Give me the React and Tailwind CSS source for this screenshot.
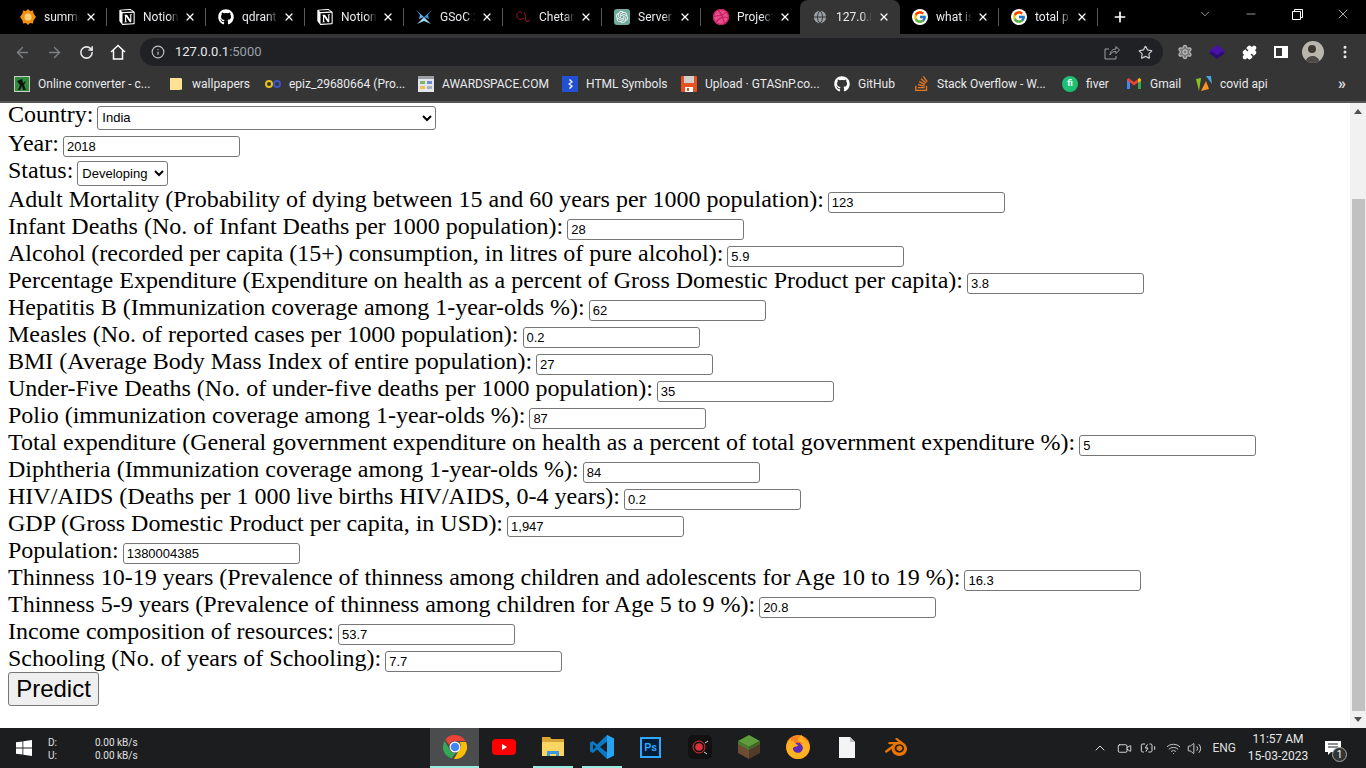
import React from "react";
import { FaGithub } from "react-icons/fa";
import { FcGoogle } from "react-icons/fc";
import { SiNotion, SiDribbble, SiOpenai, SiStackoverflow, SiBlender, SiFirefoxbrowser } from "react-icons/si";
import { ArrowLeft, ArrowRight, RotateCw, Info, Star, Puzzle, MoreVertical, X, Plus, ChevronDown, ChevronUp, Minus, Globe, Settings, Wifi, Volume2, Video, BatteryCharging } from "lucide-react";

const G = () => <span className="w-4 h-4 rounded-full bg-white flex items-center justify-center"><FcGoogle size={14} /></span>;

const Summer = () => (
  <svg width="16" height="16" viewBox="0 0 16 16">
    <path d="M8 0l2 2 3-.5.5 3L16 8l-2.500 3.500-.5 3-3-.5L8 16l-2-2-3 .5-.5-3L0 8l2.500-3.500.5-3 3 .5z" fill="#f29111" />
    <circle cx="8" cy="8" r="3.500" fill="#ffd27a" />
  </svg>
);
const Gsoc = () => (
  <svg width="16" height="16" viewBox="0 0 16 16">
    <path d="M0 1l8 7-5 2 1-4z" fill="#5fb4e8" /><path d="M16 1L8 8l5 2-1-4z" fill="#3f8fd0" />
    <path d="M1 15l7-7 7 7-7-3z" fill="#9fd3f2" />
  </svg>
);
const Chetan = () => (
  <svg width="16" height="16" viewBox="0 0 16 16" fill="none" stroke="#a0122c" strokeWidth="1">
    <path d="M7 4C4 1 1 5 2 8c1 3 5 3 7 1M9 3c2 2 1 7 2 9 1 1 3 0 4-1" />
  </svg>
);

const tabs = [
  { icon: <Summer />, t: "summer" },
  { icon: <SiNotion size={16} color="#fff" />, t: "Notion" },
  { icon: <FaGithub size={16} color="#fff" />, t: "qdrant" },
  { icon: <SiNotion size={16} color="#fff" />, t: "Notion" },
  { icon: <Gsoc />, t: "GSoC 2" },
  { icon: <Chetan />, t: "Chetan" },
  { icon: <span className="w-4 h-4 rounded-[3px] bg-[#74aa9c] flex items-center justify-center"><SiOpenai size={12} color="#fff" /></span>, t: "Server" },
  { icon: <span className="w-4 h-4 rounded-full bg-[#ea4c89] flex items-center justify-center"><SiDribbble size={16} color="#c32361" /></span>, t: "Project" },
  { icon: <Globe size={16} color="#353535" fill="#9aa0a6" strokeWidth={1.500} />, t: "127.0.0.1", active: true },
  { icon: <G />, t: "what is" },
  { icon: <G />, t: "total p" },
];

const Bm = ({ className, icon, t }) => (
  <div className={`flex items-center gap-2 shrink-0 whitespace-nowrap ${className}`}>
    <span className="w-4 h-4 flex items-center justify-center shrink-0">{icon}</span>
    <span>{t}</span>
  </div>
);

const Folder = () => (
  <svg width="12" height="14" viewBox="0 0 12 14"><path d="M0 1h11l1 1v11H0z" fill="#fde293" /><path d="M10 12h2v1h-2z" fill="#c9a74e" /></svg>
);

const Row = ({ label, v }) => (
  <div>
    <span className="text-[24px]">{label}</span>{" "}
    <input defaultValue={v} className="w-[177px] h-[21px] border border-[#767676] rounded-[3px] px-[3px] py-[1px] bg-white text-black text-[13px] font-['Liberation_Sans',sans-serif]" />
  </div>
);

const fields = [
  ["Adult Mortality (Probability of dying between 15 and 60 years per 1000 population):", "123"],
  ["Infant Deaths (No. of Infant Deaths per 1000 population):", "28"],
  ["Alcohol (recorded per capita (15+) consumption, in litres of pure alcohol):", "5.9"],
  ["Percentage Expenditure (Expenditure on health as a percent of Gross Domestic Product per capita):", "3.8"],
  ["Hepatitis B (Immunization coverage among 1-year-olds %):", "62"],
  ["Measles (No. of reported cases per 1000 population):", "0.2"],
  ["BMI (Average Body Mass Index of entire population):", "27"],
  ["Under-Five Deaths (No. of under-five deaths per 1000 population):", "35"],
  ["Polio (immunization coverage among 1-year-olds %):", "87"],
  ["Total expenditure (General government expenditure on health as a percent of total government expenditure %):", "5"],
  ["Diphtheria (Immunization coverage among 1-year-olds %):", "84"],
  ["HIV/AIDS (Deaths per 1 000 live births HIV/AIDS, 0-4 years):", "0.2"],
  ["GDP (Gross Domestic Product per capita, in USD):", "1,947"],
  ["Population:", "1380004385"],
  ["Thinness 10-19 years (Prevalence of thinness among children and adolescents for Age 10 to 19 %):", "16.3"],
  ["Thinness 5-9 years (Prevalence of thinness among children for Age 5 to 9 %):", "20.8"],
  ["Income composition of resources:", "53.7"],
  ["Schooling (No. of years of Schooling):", "7.7"],
];

const Chrome = () => (
  <svg width="24" height="24" viewBox="0 0 24 24">
    <path d="M12 0a12 12 0 0 1 10.400 6H12a6 6 0 0 0-5.700 4L2.300 4.400A12 12 0 0 1 12 0z" fill="#ea4335" />
    <path d="M1.600 6l5 8.600a6 6 0 0 0 6 3.300L8.500 23.500A12 12 0 0 1 1.600 6z" fill="#34a853" />
    <path d="M22.900 7a12 12 0 0 1-12 17l5-8.500a6 6 0 0 0 .5-8.500z" fill="#fbbc04" />
    <circle cx="12" cy="12" r="5.500" fill="#fff" /><circle cx="12" cy="12" r="4.300" fill="#4285f4" />
  </svg>
);
const Yt = () => (
  <svg width="24" height="16" viewBox="0 0 24 16"><rect width="24" height="16" rx="4" fill="#f00" /><path d="M10 5l5 3-5 3z" fill="#fff" /></svg>
);
const Explorer = () => (
  <svg width="22" height="20" viewBox="0 0 22 20">
    <path d="M0 0h8l2 3h-10z" fill="#e0a526" /><rect y="2" width="22" height="5" fill="#d9a53a" />
    <rect y="5" width="22" height="14" fill="#fcd462" />
    <path d="M5 19v-5h12v5h-3v-2H8v2z" fill="#3a9bdc" />
  </svg>
);
const Vscode = () => (
  <svg width="24" height="24" viewBox="0 0 24 24">
    <path d="M17 0l7 3.500v17L17 24 7 14.500l-4 3.500-3-1.500v-9L3 6l4 3.500z" fill="#0a7ac6" />
    <path d="M17 0l7 3.500v17L17 24z" fill="#2aa3ef" /><path d="M17 6.500L10 12l7 5.500z" fill="#1b1d1e" />
    <path d="M3 9l3 3-3 3z" fill="#1b1d1e" />
  </svg>
);
const Rec = () => (
  <span className="w-6 h-6 rounded-[5px] bg-[#111] flex items-center justify-center">
    <svg width="18" height="18" viewBox="0 0 18 18" fill="none"><circle cx="8" cy="9" r="6" stroke="#e0313b" strokeWidth="1" /><circle cx="8" cy="9" r="3.800" fill="#e0313b" /><path d="M14 5l3-2M13 14l3 2" stroke="#ddd" strokeWidth="1" /></svg>
  </span>
);
const Grass = () => (
  <svg width="22" height="24" viewBox="0 0 22 24">
    <path d="M11 0l11 6-11 6L0 6z" fill="#5f9c3c" /><path d="M0 6l11 6v12L0 18z" fill="#6d4c33" /><path d="M22 6l-11 6v12l11-6z" fill="#523a28" />
    <path d="M0 6l11 6v3L0 9z" fill="#4a7d2e" /><path d="M22 6l-11 6v3l11-6z" fill="#3e6b27" />
  </svg>
);
const Fox = () => (
  <span className="w-6 h-6 flex items-center justify-center rounded-full bg-[radial-gradient(circle_at_50%_55%,#5b2bbd_0_28%,#ff6a2a_30%,#ff9b1f_100%)]">
    <SiFirefoxbrowser size={24} color="#ffb21f" />
  </span>
);
const Doc = () => (
  <svg width="16" height="21" viewBox="0 0 16 21"><path d="M0 0h11l5 5v16H0z" fill="#f4f4f4" /><path d="M11 0l5 5h-5z" fill="#bdbdbd" /></svg>
);
const Win = () => (
  <svg width="16" height="16" viewBox="0 0 16 16" fill="#fff"><path d="M0 2.300l6.500-.9v6.200H0zM7.300 1.300L16 0v7.600H7.300zM0 8.400h6.500v6.200L0 13.700zM7.300 8.400H16V16l-8.700-1.300z" /></svg>
);

const Task = ({ children, active, bar }) => (
  <div className={`w-[49px] h-full flex flex-col items-center shrink-0 ${active ? "bg-[#4a4c4d]" : ""}`}>
    <div className="flex-1 flex items-center justify-center">{children}</div>
    <div className={`h-[2px] ${active ? "w-full bg-[#99ebe0]" : bar ? "w-[40px] bg-[#99ebe0]" : "w-0"}`} />
  </div>
);

export default function App() {
  return (
    <div className="w-[1366px] h-[768px] overflow-hidden flex flex-col bg-white font-['Roboto',sans-serif]">
      {/* tab strip */}
      <div className="h-[34px] bg-black flex items-center pl-2 shrink-0 text-[12px] text-[#e8eaed]">
        {tabs.map((t, i) => (
          <div key={i} className={t.active ? "w-[100px] h-full pl-3 pr-[10px] bg-[#353535] rounded-t-[8px] flex items-center shrink-0" : `w-[99px] h-[18px] pl-3 pr-[9px] flex items-center shrink-0 ${tabs[i + 1]?.active || t.active ? "" : "border-r border-[#5a5a5a]"}`}>
            <span className="w-4 h-4 flex items-center justify-center shrink-0">{t.icon}</span>
            <span className="ml-2 w-[36px] overflow-hidden whitespace-nowrap [mask-image:linear-gradient(90deg,#000_70%,transparent)]">{t.t}</span>
            <X size={12} strokeWidth={2.500} className="ml-auto text-white shrink-0" />
          </div>
        ))}
        <div className="w-[44px] flex justify-center shrink-0"><Plus size={16} strokeWidth={2.500} color="#fff" /></div>
        <div className="ml-auto flex h-full items-center shrink-0 text-white">
          <div className="w-[46px] flex justify-center pb-[6px]"><ChevronDown size={14} strokeWidth={1} /></div>
          <div className="w-[46px] flex justify-center pb-[6px]"><Minus size={14} strokeWidth={1} /></div>
          <div className="w-[46px] flex justify-center pb-[6px]">
            <svg width="11" height="11" viewBox="0 0 11 11" fill="none" stroke="#fff"><path d="M.5 2.500h8v8h-8zM2.500 2.500v-2h8v8h-2" /></svg>
          </div>
          <div className="w-[46px] flex justify-center pb-[6px]"><X size={16} strokeWidth={1} /></div>
        </div>
      </div>

      {/* toolbar */}
      <div className="h-[32px] bg-[#353535] flex items-end pl-[6px] pr-[5px] shrink-0 text-[#e8eaed]">
        <div className="w-8 h-[28px] flex items-center justify-center"><ArrowLeft size={17} color="#7d7f82" /></div>
        <div className="w-8 h-[28px] flex items-center justify-center"><ArrowRight size={17} color="#7d7f82" /></div>
        <div className="w-8 h-[28px] flex items-center justify-center"><RotateCw size={15} strokeWidth={2.500} /></div>
        <div className="w-8 h-[28px] flex items-center justify-center">
          <svg width="16" height="16" viewBox="0 0 16 16" fill="none" stroke="#fff" strokeWidth="1.500"><path d="M1 8l7-6.500L15 8M3.500 6.500V15h9V6.500" /></svg>
        </div>
        <div className="flex-1 ml-[6px] h-[28px] rounded-[14px] bg-[#202124] flex items-center pl-[11px] pr-[8px] text-[13px]">
          <Info size={14} color="#bdc1c6" />
          <span className="ml-[10px]">127.0.0.1<span className="text-[#9aa0a6]">:5000</span></span>
          <svg width="16" height="15" viewBox="0 0 16 15" fill="none" stroke="#9aa0a6" strokeWidth="1" className="ml-auto">
            <path d="M5 4H1v10h11v-3M6 10c0-4 3-6 6-6V1.500L15.500 5 12 8.500V6.500c-3 0-5 1-6 3.500z" />
          </svg>
          <Star size={15} color="#c4c7cc" className="ml-[18px] mr-[2px]" />
        </div>
        <div className="w-[6px]" />
        <div className="w-8 h-[28px] flex items-center justify-center"><Settings size={16} color="#b5b5b5" fill="#777" /></div>
        <div className="w-8 h-[28px] flex items-center justify-center">
          <svg width="16" height="16" viewBox="0 0 16 16"><path d="M8 1l8 6-8 6-8-6z" fill="#4712a8" /><path d="M0 9l8 6 8-6-3-1.500-5 3.500-5-3.500z" fill="#2e0d73" /></svg>
        </div>
        <div className="w-8 h-[28px] flex items-center justify-center"><Puzzle size={15} color="#fff" fill="#fff" /></div>
        <div className="w-8 h-[28px] flex items-center justify-center">
          <svg width="14" height="12" viewBox="0 0 14 12"><path d="M0 0h14v12H0z" fill="#fff" /><path d="M2 2h6v8H2z" fill="#353535" /></svg>
        </div>
        <div className="w-8 h-[28px] flex items-center justify-center">
          <span className="w-[22px] h-[22px] rounded-full bg-[#b9b6ad] flex items-center justify-center overflow-hidden">
            <svg width="22" height="22" viewBox="0 0 22 22"><circle cx="10" cy="8" r="4" fill="#3d3833" /><path d="M3 22c1-6 5-7 8-7s6 2 7 7z" fill="#4e4a45" /></svg>
          </span>
        </div>
        <div className="w-8 h-[28px] flex items-center justify-center"><MoreVertical size={16} color="#e8eaed" strokeWidth={2.500} /></div>
      </div>

      {/* bookmarks */}
      <div className="h-[37px] bg-[#353535] border-b-2 border-[#555] flex items-center pl-[14px] shrink-0 text-[12px] text-[#e8eaed]">
        <Bm className="w-[154px]" t="Online converter - c..." icon={
          <svg width="16" height="16" viewBox="0 0 16 16"><rect width="16" height="16" fill="#ccc" /><rect x="1" y="1" width="14" height="14" fill="#2e8b3a" /><path d="M8 3l1 4 3-2-2 4 2 5H9L8 10l-2 4H4l2-5-3-4z" fill="#111" /></svg>
        } />
        <Bm className="w-[97px]" t="wallpapers" icon={<Folder />} />
        <Bm className="w-[153px]" t="epiz_29680664 (Pro..." icon={
          <svg width="16" height="10" viewBox="0 0 16 10" fill="none" strokeWidth="2"><circle cx="4" cy="5" r="3" stroke="#e6c01f" /><circle cx="12" cy="5" r="3" stroke="#3d55c9" /></svg>
        } />
        <Bm className="w-[144px]" t="AWARDSPACE.COM" icon={
          <svg width="16" height="16" viewBox="0 0 16 16"><rect width="16" height="16" fill="#e4e6ea" /><rect y="0" width="16" height="3" fill="#9aa0a8" /><rect x="2" y="5" width="5" height="3" fill="#7db66a" /><rect x="9" y="5" width="5" height="3" fill="#6b8fd1" /><rect x="2" y="10" width="5" height="3" fill="#e6c25a" /><rect x="9" y="10" width="5" height="3" fill="#aab0b8" /></svg>
        } />
        <Bm className="w-[119px]" t="HTML Symbols" icon={
          <svg width="16" height="16" viewBox="0 0 16 16"><rect width="16" height="16" fill="#2150d0" /><path d="M8 3l3 3-3 2 3 2-3 3-1-1 2-2-3-2 3-2-2-2z" fill="#fff" /></svg>
        } />
        <Bm className="w-[153px]" t="Upload · GTASnP.co..." icon={
          <svg width="16" height="16" viewBox="0 0 16 16"><rect width="16" height="16" rx="1" fill="#e8501f" /><rect x="3" y="0" width="10" height="7" fill="#d0d0d0" /><rect x="4" y="11" width="8" height="5" fill="#fff" /><rect x="6" y="12" width="2" height="3" fill="#e8501f" /></svg>
        } />
        <Bm className="w-[79px]" t="GitHub" icon={<FaGithub size={16} color="#fff" />} />
        <Bm className="w-[149px]" t="Stack Overflow - W..." icon={<SiStackoverflow size={15} color="#e87922" />} />
        <Bm className="w-[64px]" t="fiver" icon={
          <span className="w-4 h-4 rounded-full bg-[#1dbf73] flex items-center justify-center text-white text-[9px] font-bold leading-none">fi</span>
        } />
        <Bm className="w-[70px]" t="Gmail" icon={
          <svg width="14" height="11" viewBox="0 0 14 11"><path d="M0 1.500V11h3V4z" fill="#4285f4" /><path d="M14 1.500V11h-3V4z" fill="#34a853" /><path d="M0 1.500L1.500 0 7 4l5.500-4L14 1.500v.5l-3 2.500-4 3-4-3-3-2.500z" fill="#ea4335" /><path d="M11 1l1.500-1L14 1.500V3l-3 1.500z" fill="#fbbc04" /></svg>
        } />
        <Bm className="w-[142px]" t="covid api" icon={
          <svg width="16" height="16" viewBox="0 0 16 16"><path d="M0 3l5-1-2 13z" fill="#8fc31f" /><path d="M5 15L10 5l3 8z" fill="#f7931e" /><path d="M10 0l5 0 1 8z" fill="#4da3dc" /></svg>
        } />
        <span className="text-[16px] font-bold text-[#ddd] leading-none">»</span>
      </div>

      {/* page */}
      <div className="flex-1 min-h-0 flex">
        <main className="flex-1 min-w-0 -mt-[2px] pl-2 text-[16px] leading-[normal] text-black font-['Liberation_Serif',serif]">
          <div>
            <span className="text-[24px]">Country:</span>{" "}
            <select defaultValue="India" className="w-[339px] h-[24px] border border-[#767676] rounded-[3px] bg-white text-[13px] font-['Liberation_Sans',sans-serif]">
              <option>India</option>
            </select>
          </div>
          <Row label="Year:" v="2018" />
          <div>
            <span className="text-[24px]">Status:</span>{" "}
            <select defaultValue="Developing" className="w-[91px] h-[25px] border border-[#767676] rounded-[3px] bg-white text-[13px] font-['Liberation_Sans',sans-serif]">
              <option>Developing</option>
            </select>
          </div>
          {fields.map(([l, v]) => <Row key={l} label={l} v={v} />)}
          <button className="block w-[91px] h-[34px] bg-[#efefef] border border-[#767676] rounded-[3px] text-[24px] leading-none font-['Liberation_Sans',sans-serif]">Predict</button>
        </main>
        <div className="w-[16px] bg-[#f1f1f1] flex flex-col items-center shrink-0">
          <div className="h-[17px] flex items-center justify-center text-[#505050]">
            <svg width="8" height="5" viewBox="0 0 8 5" fill="#505050"><path d="M4 0l4 5H0z" /></svg>
          </div>
          <div className="w-[13px] flex-1 mt-[79px] bg-[#c1c1c1]" />
          <div className="h-[17px] flex items-center justify-center">
            <svg width="8" height="5" viewBox="0 0 8 5" fill="#505050"><path d="M4 5l4-5H0z" /></svg>
          </div>
        </div>
      </div>

      {/* taskbar */}
      <div className="h-[40px] bg-[#1b1d1e] flex items-center shrink-0 text-white">
        <div className="w-[48px] flex items-center justify-center"><Win /></div>
        <div className="w-[382px] pt-[1px] text-[10px] leading-[13px] text-[#e0e0e0] grid grid-cols-[47px_1fr]">
          <span>D:</span><span>0.00 kB/s</span>
          <span>U:</span><span>0.00 kB/s</span>
        </div>
        <div className="flex h-full">
          <Task active><Chrome /></Task>
          <Task><Yt /></Task>
          <Task bar><Explorer /></Task>
          <Task bar><Vscode /></Task>
          <Task>
            <span className="w-[21px] h-[21px] bg-[#001e36] border-2 border-[#31a8ff] text-[#31a8ff] text-[11px] font-semibold flex items-center justify-center leading-none">Ps</span>
          </Task>
          <Task><Rec /></Task>
          <Task><Grass /></Task>
          <Task><Fox /></Task>
          <Task><Doc /></Task>
          <Task><SiBlender size={22} color="#ea7600" /></Task>
        </div>
        <div className="ml-auto flex items-center h-full pr-[8px]">
          <ChevronUp size={16} strokeWidth={1.500} className="mr-[9px] text-[#ddd]" />
          <Video size={15} strokeWidth={1.500} className="mr-[8px] text-[#ddd]" />
          <BatteryCharging size={16} strokeWidth={1.500} className="mr-[10px] text-[#ddd]" />
          <Wifi size={15} strokeWidth={1.500} className="mr-[6px] text-[#ccc]" />
          <Volume2 size={15} strokeWidth={1.500} className="mr-[10px] text-[#ddd]" />
          <span className="text-[12px] text-[#ddd] mr-[12px]">ENG</span>
          <div className="w-[60px] text-[12px] leading-[17px] text-center text-[#e6e6e6] whitespace-nowrap flex flex-col items-center">
            <span>11:57 AM</span><span>15-03-2023</span>
          </div>
          <div className="w-[50px] flex items-center justify-center relative">
            <svg width="16" height="14" viewBox="0 0 16 14"><path d="M0 0h16v11H6l-3 3v-3H0z" fill="#fff" /><path d="M3 3h10M3 6h10" stroke="#1b1d1e" /></svg>
            <span className="absolute left-[24px] top-[6px] w-[15px] h-[15px] rounded-full bg-[#333] border border-[#aaa] text-[10px] leading-none flex items-center justify-center">1</span>
          </div>
        </div>
      </div>
    </div>
  );
}
